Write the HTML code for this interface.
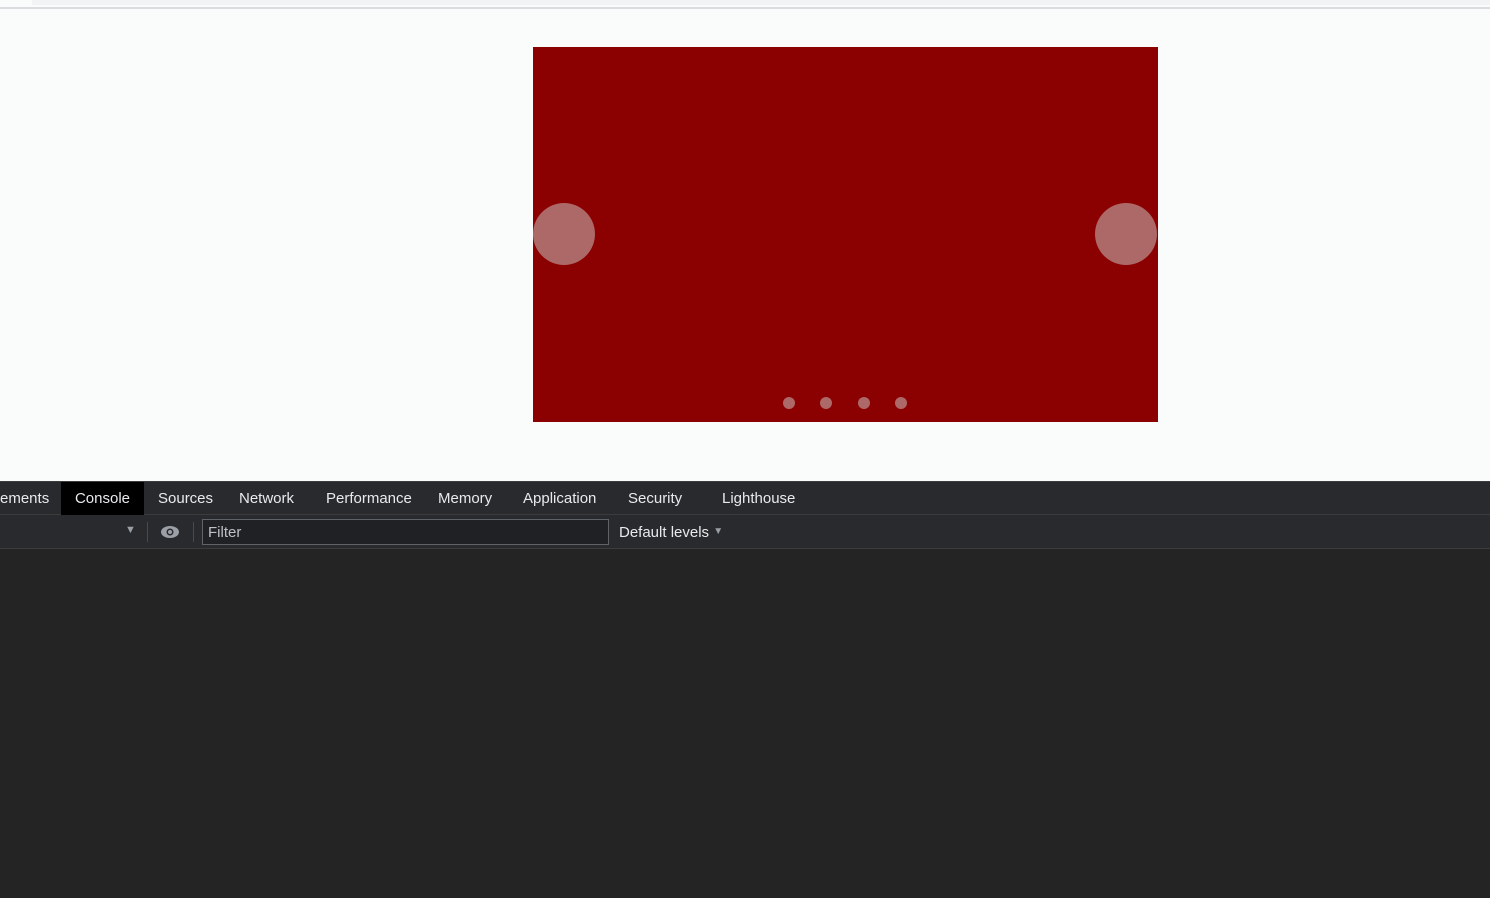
<!DOCTYPE html>
<html><head><style>
body{margin:0;width:1490px;height:898px;position:relative;background:#fafcfc;overflow:hidden;font-family:"Liberation Sans",sans-serif}
.top{position:absolute;left:0;top:0;width:1490px;height:7px;background:#fafcfc}
.top2{position:absolute;left:32px;top:0;width:1458px;height:5px;background:#f1f3f4}
.line{position:absolute;left:0;top:7px;width:1490px;height:2px;background:#dadce0}
.car{position:absolute;left:533px;top:47px;width:625px;height:375px;background:#8b0000}
.btn{position:absolute;top:156px;width:62px;height:62px;border-radius:50%;background:#ad6868}
.dot{position:absolute;top:350px;width:12px;height:12px;border-radius:50%;background:#ad6868}
.dt{position:absolute;left:0;top:481px;width:1490px;height:417px;background:#242424}
.tabs{position:absolute;left:0;top:0;width:1490px;height:34px;background:#292a2d;border-top:1px solid #3c3c3c;border-bottom:1px solid #3c3c3c;box-sizing:border-box}
.tab{position:absolute;top:0;height:33px;line-height:33px;color:#e8eaed;font-size:15px}
.bar{position:absolute;left:0;top:34px;width:1490px;height:34px;background:#292a2d;border-bottom:1px solid #3c3c3c;box-sizing:border-box}
</style></head><body>
<div class="top"></div><div class="top2"></div><div class="line"></div>
<div class="car">
<div class="btn" style="left:0"></div><div class="btn" style="left:562px"></div>
<div class="dot" style="left:250px"></div><div class="dot" style="left:287px"></div><div class="dot" style="left:325px"></div><div class="dot" style="left:362px"></div>
</div>
<div class="dt">
<div class="tabs">
<div class="tab" style="left:0">ements</div>
<div class="tab" style="left:61px;width:83px;background:#000;text-align:center">Console</div>
<div class="tab" style="left:158px">Sources</div>
<div class="tab" style="left:239px">Network</div>
<div class="tab" style="left:326px">Performance</div>
<div class="tab" style="left:438px">Memory</div>
<div class="tab" style="left:523px">Application</div>
<div class="tab" style="left:628px">Security</div>
<div class="tab" style="left:722px">Lighthouse</div>
</div>
<div class="bar">
<div style="position:absolute;left:125px;top:9px;color:#9aa0a6;font-size:11px">▼</div>
<div style="position:absolute;left:147px;top:7px;width:1px;height:20px;background:#4a4a4a"></div>
<svg style="position:absolute;left:160px;top:9px" width="20" height="16" viewBox="0 0 20 16"><ellipse cx="10" cy="8" rx="9" ry="6" fill="#9aa0a6"/><circle cx="10" cy="8" r="3.5" fill="#292a2d"/><circle cx="10" cy="8" r="2" fill="#9aa0a6"/></svg>
<div style="position:absolute;left:193px;top:7px;width:1px;height:20px;background:#4a4a4a"></div>
<div style="position:absolute;left:202px;top:4px;width:407px;height:26px;border:1px solid #5f6368;box-sizing:border-box;background:#202124;color:#bdc1c6;font-size:15px;line-height:26px;padding-left:5px">Filter</div>
<div style="position:absolute;left:619px;top:0;height:33px;line-height:33px;color:#e8eaed;font-size:15px">Default levels <span style="color:#9aa0a6;font-size:10px;vertical-align:3px">▼</span></div>
</div>
</div>
</body></html>
